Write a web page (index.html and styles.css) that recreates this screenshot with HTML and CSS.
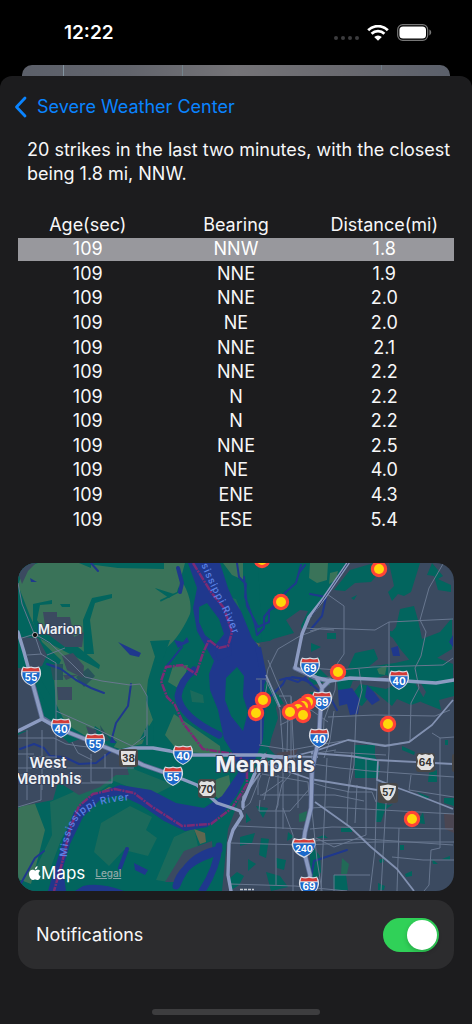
FILE: index.html
```html
<!DOCTYPE html>
<html lang="en">
<head>
<meta charset="utf-8">
<meta name="viewport" content="width=device-width, initial-scale=1">
<title>Lightning strikes</title>
<link rel="stylesheet" href="styles.css">
</head>
<body>
<header class="status">
  <time class="clock">12:22</time>
  <div class="status-icons">
    <span class="dots"><i></i><i></i><i></i><i></i></span>
    <svg class="wifi" viewBox="0 0 22 16" aria-label="Wi-Fi"><path d="M1.2 5.2a14 14 0 0 1 19.6 0M4.6 8.8a9.2 9.2 0 0 1 12.8 0" fill="none" stroke="#fff" stroke-width="2.8"/><path d="M7.2 12a5.4 5.4 0 0 1 7.6 0L11 15.8z" fill="#fff"/></svg>
    <svg class="battery" viewBox="0 0 35 17" aria-label="Battery"><rect x=".7" y=".7" width="30" height="15.6" rx="5" fill="none" stroke="#777" stroke-width="1.2"/><rect x="2.4" y="2.4" width="26.6" height="12.2" rx="3.6" fill="#fff"/><path d="M32.4 5.6c2.4 1 2.4 4.8 0 5.8z" fill="#777"/></svg>
  </div>
</header>
<div class="peek"></div>
<main class="sheet">
  <nav class="nav">
    <a class="back" href="#"><svg viewBox="0 0 13 22" aria-hidden="true"><path d="M11 2 2.500 11 11 20" fill="none" stroke="currentColor" stroke-width="2.8" stroke-linecap="round" stroke-linejoin="round"/></svg>Severe Weather Center</a>
  </nav>
  <p class="summary">20 strikes in the last two minutes, with the closest being 1.8 mi, NNW.</p>
  <table class="strikes">
    <thead><tr><th>Age(sec)</th><th>Bearing</th><th>Distance(mi)</th></tr></thead>
    <tbody>
      <tr class="selected"><td>109</td><td>NNW</td><td>1.8</td></tr>
      <tr><td>109</td><td>NNE</td><td>1.9</td></tr>
      <tr><td>109</td><td>NNE</td><td>2.0</td></tr>
      <tr><td>109</td><td>NE</td><td>2.0</td></tr>
      <tr><td>109</td><td>NNE</td><td>2.1</td></tr>
      <tr><td>109</td><td>NNE</td><td>2.2</td></tr>
      <tr><td>109</td><td>N</td><td>2.2</td></tr>
      <tr><td>109</td><td>N</td><td>2.2</td></tr>
      <tr><td>109</td><td>NNE</td><td>2.5</td></tr>
      <tr><td>109</td><td>NE</td><td>4.0</td></tr>
      <tr><td>109</td><td>ENE</td><td>4.3</td></tr>
      <tr><td>109</td><td>ESE</td><td>5.4</td></tr>
    </tbody>
  </table>
  <div class="map">
    <svg class="map-art" viewBox="18 563 436 328" preserveAspectRatio="xMidYMid slice" role="img" aria-label="Map of strikes near Memphis">
      <defs>
        <symbol id="interstate" viewBox="-11 -11 22 22" overflow="visible">
          <path d="M-8-9.500Q-4-8 0-9.500 4-8 8-9.500 11-5 9.700 0 8 6.500 0 10-8 6.500-9.700 0-11-5-8-9.500z" fill="#d9dce5"/>
          <path d="M-8.600-3.800H8.600Q9.500 5 0 8.700-9.500 5-8.600-3.800z" fill="#1b68ca"/>
          <path d="M-7.600-8.200Q-4-6.800 0-8.200 4-6.800 7.600-8.200L8.500-4.800H-8.500z" fill="#d23b37"/>
        </symbol>
        <g id="strike"><circle r="8.200" fill="#ff4336"/><circle r="5" fill="#ffd60a"/></g>
        <path id="river-north" d="M194 546Q205 576 216 597 228 620 236 642"/>
        <path id="river-south" d="M67 857Q67 836 78 819 92 801 137 800"/>
      </defs>

      <rect x="18" y="563" width="436" height="328" fill="#3b4a60"/>
      <!-- floodplain -->
      <path fill="#02655e" d="M18 563H345L325 594 314 601 308 622 294 634 270 640 258 643 266 680 278 696 270 745 256 770 240 797 228 829 222 891H18z"/>
      <path fill="#3a7359" d="M24 568 38 563H185L177 592 160 600 168 621 157 650 148 680 146 700 153 720 142 744 120 749 92 740 66 724 56 704 54 678 61 660 42 642 30 616 18 585z"/>
      <path fill="#3a7359" d="M172 566Q194 595 190 614 177 643 160 652L160 602 180 592zM223 563H243V580L232 575zM268 578 276 584 273 594 266 588zM174 714 220 746 221 755 178 751 165 735zM188 665 181 690 168 682 173 666zM217 779 229 775 232 796 222 802 206 788zM18 808 34 801 45 830 38 858 31 884 18 879z"/>
      <path fill="#1b6a5b" d="M50 802 92 784 131 768 174 785 152 796 114 781 80 805 61 840 46 880H30L52 835zM101 823 130 806 152 817 146 830 157 838 148 856 124 850 109 866 94 852zM174 837 194 828 198 846 184 864 168 882 156 880zM190 690 203 695 204 703 192 702zM224 596 236 599 242 614 238 612zM262 567 286 563 300 580 284 588 272 584zM268 603 288 608 306 601 294 621 276 618z"/>
      <!-- wooded bands on the farmland -->
      <path fill="#02655e" d="M80 563H164V569L118 568zM92 598 112 594V598L95 603 90 620 94 654H84L83 620zM33 604 52 600V604L40 605 37 620 46 633 78 647 100 665 99 669 72 655 39 638 33 622zM60 604H70V607H62zM155 588 174 594 169 598 156 589zM150 641 170 640 162 662 157 663zM40 678 58 708 53 716 33 680zM95 726 117 742 113 748 91 735zM56 724 72 731 90 741 76 742 56 730zM144 734 153 720 154 746 144 745zM79 563H91V568zM148 724 152 736 139 741z"/>
      <path fill="#28535b" d="M50 664H63V680H53zM76 677 88 668 95 676 84 687zM100 725 110 740 103 742z"/>
      <!-- settlements -->
      <path fill="#3b4a60" d="M18 563H36L28 571 22 584 18 572zM43 612H57V617H70L74 637 84 632 82 647H65L46 633zM20 637 38 638 47 655 42 666 29 670zM62 656 73 653 84 666 83 678 67 670zM18 670 30 676 32 701H18zM57 687H72V700H58zM18 735 46 722 69 743 83 738 98 747 123 752 126 763 129 775H116L100 787 79 795 58 782 53 800 18 807zM18 668H32L45 725 18 733zM86 726 96 730 98 741 90 738zM63 675H78L66 680z"/>
      <path fill="#3b4a60" d="M184 851 212 841 213 855 194 865 178 882H165z"/>
      <!-- city woods -->
      <path fill="#02655e" d="M258 563H346L318 605 310 618 303 629 294 634 276 640 262 642zM292 563H318L314 585 297 610 280 610zM350 570 374 563 384 568 371 582 355 583 345 591 334 590zM389 563H420L411 592 404 596 398 594 392 601 388 592 394 586zM351 598 357 595 354 600zM432 563 443 576 438 579 451 585V592L438 590 434 576 427 575zM400 609 414 606 418 620 422 639 440 632 452 618V649L432 661 412 663 401 650 390 634H390L396 627zM390 631 408 634 420 628 419 640 400 643 390 636zM327 633H336V639H327zM311 643 321 647 311 652zM355 653 374 649 378 659 366 669 348 668zM307 666 320 657 318 667 331 680 310 686zM395 663 430 655 453 664V681L411 684 386 675 371 680 340 681 345 670zM360 684 386 689 400 682 415 683 425 700 411 705 397 699 392 706 374 691 362 706 348 700zM419 680 454 682V696L439 700 441 710 421 702 426 692zM354 745H375V756L380 767 378 778H355zM402 746 415 752 414 755 402 750zM429 773 437 770 437 782H428zM444 798H454V806L444 803zM417 792 430 797 425 799zM376 802 389 805 393 804 385 810 381 822H376zM423 812 425 824 417 823zM445 740H448V745H445zM337 680 354 678 350 688 344 694 338 690zM310 692 319 692 320 702 312 699z"/>
      <path fill="#02655e" d="M310 843 320 856 321 872 310 890zM333 875H346L348 890H334zM316 838 324 835 328 838zM341 828H352V832H341zM400 845H404V850H400zM379 860 384 858 384 862 380 863zM405 874 412 871V876L406 877zM378 883 385 886 384 890H378zM432 859 438 864 433 864zM442 859 450 856V860zM244 780 251 777 247 785zM246 813 251 820 246 823zM256 806 268 808 263 818zM240 837 255 833 252 843 240 846zM261 838 269 839 266 858 259 855zM248 859 256 864 248 871zM276 858 286 860 284 870 277 868zM266 872 280 876 288 887 271 891zM237 872 244 876 239 885 230 891 230 878zM288 832 294 837 287 841zM268 697 273 694 278 718 270 742 264 744zM266 745 276 756 268 766zM278 694 284 704 274 706z"/>
      <path fill="#3a7359" d="M310 563H328L327 580 317 583 309 578zM377 669 387 665 385 675 379 674zM321 679 331 676 330 685 325 686zM330 573 338 571 336 580 329 584z"/>
      <path fill="#226a57" d="M342 858 349 864 347 874H341zM299 814 307 811 306 821 299 822z"/>
      <path fill="#3b4a60" d="M286 620 300 610 308 611 301 626 306 643 284 645 264 660 259 648 273 639 294 633z"/>
      <path fill="#60674f" d="M194 829 205 833 206 842 200 844zM97 794 109 787 116 789 105 796 96 799zM255 642 260 644 257 648 254 646z"/>
      <path fill="#4b4652" d="M444 814H454V833L445 829zM277 753 298 749 294 758 283 770 277 763z"/>
      <!-- river -->
      <path fill="#1f388d" d="M188 563H220L228 588 233 599 241 611 252 638 258 645 263 668 265 704 263 739 255 760 246 777 237 795 224 812 207 827 185 831 164 821 141 805 120 795 101 799 83 817 70 844 63 868 66 891H48L56 864 64 838 74 812 91 795 120 785 151 790 176 803 204 808 222 796 238 773 234 755 224 739 218 710 210 690 209 674 214 661 207 649 197 631 193 608 197 588z"/>
      <path fill="#02655e" d="M199 607 207 603 219 619 224 634 216 644 205 635 199 622zM226 678 237 667 244 676 243 696 248 712 243 731 231 716 225 700z"/>
      <g fill="none" stroke="#1f388d" stroke-linecap="round" stroke-linejoin="round">
        <path stroke-width="7" d="M194 670Q181 680 178 696 180 716 219 735"/>
        <path stroke-width="7" d="M176 886Q181 865 209 855L219 850M219 846Q217 868 202 891M216 850Q188 856 177 885"/>
        <path stroke-width="2" d="M166 667 182 647M237 563 239 577 246 584 245 597 255 624 257 635 264 628 264 617 274 605 287 591 296 583 301 565M299 573 305 565M244 577 247 606 258 627 269 622 269 610 281 605M47 664 61 669 76 680 91 688 104 693M131 684 128 706 116 723 111 742M20 749 34 744 44 748 50 756 64 757 79 764 96 763 110 752M91 563 98 571M292 677 306 679 312 684M271 696 283 684 286 678 298 682 306 677M310 594 326 597 322 616 311 629M280 680Q300 672 318 690L330 697 337 710M310 884 314 861 329 856 347 850M20 885 35 858 44 851"/>
        <path stroke-width="4" d="M120 868 127 849M178 568 182 583 180 592"/>
      </g>
      <path fill="#1f388d" d="M30 578 37 582H31zM118 642 141 653 139 657 130 655zM338 690 352 688 360 700 358 714 350 715 347 704 339 706zM367 685 374 692 380 700 372 705 365 697zM391 648 398 646 400 656 393 656zM134 863 148 870 145 875 135 870zM174 640 183 642 187 637 189 642 178 648zM215 651 231 642 232 655 218 661zM255 647H261L267 677 263 688zM453 635V647L449 642zM83 886Q100 882 124 891H75zM113 738 116 743 111 743z"/>
      <!-- state line -->
      <path fill="none" stroke="#7a2b74" stroke-width="2.500" stroke-dasharray="8 1 2 1" d="M193 563 211 592 224 608 232 632 228 646 219 648 209 640 203 653 196 674 182 665 166 667 161 681 167 697 175 705 183 723 203 749 239 755 247 770 247 784 232 808 211 824 182 826 151 806 134 793 115 789 93 794 79 806 70 829 62 863 54 891"/>

      <!-- minor roads -->
      <g fill="none" stroke="#68778f" stroke-width="1" stroke-linejoin="round">
        <path d="M18 583 22 604 35 636 41 654 56 663V768M22 638 35 634 50 643 73 665 85 677 102 681 130 685 140 684 147 696V745M42 654 27 655M47 655 65 648M56 711 90 726 132 746 145 736V730M18 738H54L66 744 79 746 98 748M28 757H57M18 754H34M42 730V790M27 730V800M72 742 78 753 92 760M18 768H134M18 775H70M81 775V783H112V768M105 754V768M91 754V782H112M18 807 41 800V775"/>
        <path d="M327 594 344 606V654L337 664 335 690 324 720 323 742M310 631 322 628 375 630 389 622 453 619M389 622V673L389 750 381 891M443 564 429 588 420 620 426 632 421 656 415 668 419 688 411 703 410 742M310 668 338 670 373 667 443 665 453 658M359 669 362 690 356 714 354 765 348 793 347 825M268 679 265 696M268 679H256M319 629 300 636 278 649 268 669 266 680 280 710 283 752M305 628 334 630M279 696H291L294 760M261 680 261 744M291 697V759M280 725 311 710 328 722M268 660 277 682 288 706 287 752M259 745 291 750 318 745 348 740 386 745 410 742 432 725 453 700M432 733 440 738 454 737M440 738V848L431 850 429 885 424 891M328 717 375 715 435 716 450 710M311 754 336 750M313 764 340 768 370 771 454 777M312 753 310 791 317 860 322 891M324 758 330 740 334 711M327 758 321 891M334 752 350 753 386 755M352 752 348 793M366 759V835L334 847 316 838"/>
        <path d="M261 775 250 803 244 808M260 800 259 811H290L312 786V776M262 795 283 780M278 775 278 805 276 810V885M258 775V795M290 760V775L282 784 276 810M283 808 293 835V845 891M238 826 303 829M231 843 302 845 375 842H454M230 884 295 886 347 891M262 774 308 782 309 795H260M266 764 310 770 309 790M310 782 326 787 350 792 372 792 376 802M310 795 335 795 364 801M310 808 329 807 454 814M310 829 332 827 453 829M399 828 397 891M377 780 375 850 370 891M310 841 366 839 453 845M392 857 423 860H454M334 891V875H370M411 775 409 790 454 797M357 785 355 823M283 770V829M273 763 264 800M298 758V808"/>
      </g>
      <!-- secondary roads -->
      <g fill="none" stroke="#8190b0" stroke-width="1.800" stroke-linejoin="round">
        <path d="M267 764 310 779 377 790M315 802 350 827 371 847 397 869 414 891M378 780 398 788 420 796 453 809M311 753 350 756 376 760 453 764M378 760 377 780 390 785M287 758 318 750 348 740 385 746 409 742 432 725 453 700M260 773 243 797V810M266 675 280 707M266 764 278 756 318 757"/>
      </g>
      <!-- highways -->
      <g fill="none" stroke-linecap="round" stroke-linejoin="round">
        <g stroke="#5c6c94" stroke-width="5"><path d="M30 674 42 718M42 718 60 729 95 743 117 752 143 765 172 775M295 668 318 679 330 680 322 688 320 718 319 738 312 770 311 808 305 832 303 847 310 875V891"/></g>
        <g stroke="#8c9bc1" stroke-width="3.400"><path d="M18 632 24 652 30 674 42 718M18 731 42 719 60 729 95 743 117 752 143 765 172 775 197 785 217 803 232 808 240 811 242 816 233 830 229 843 228 875 231 891M117 752 133 748H153L170 751 183 755H260L287 758M348 563 324 598 309 617 302 634 295 668 318 678 330 681 350 678 390 680 436 683 454 680M330 680 322 688 320 718 319 738 312 770 311 808 305 832 303 847 310 875V891M317 679 322 688M265 755 255 773 243 802V807"/></g>
      </g>
      <path d="m348 563-36 53" stroke="#33436a" stroke-width="1"/>

      <g class="shields">
        <use href="#interstate" x="20" y="665" width="22" height="22"/><text x="31" y="681">55</text>
        <use href="#interstate" x="50" y="717" width="22" height="22"/><text x="61" y="733">40</text>
        <use href="#interstate" x="84" y="732" width="22" height="22"/><text x="95" y="748">55</text>
        <use href="#interstate" x="172" y="744" width="22" height="22"/><text x="183" y="760">40</text>
        <use href="#interstate" x="162" y="765" width="22" height="22"/><text x="173" y="781">55</text>
        <use href="#interstate" x="299" y="656" width="22" height="22"/><text x="310" y="672">69</text>
        <use href="#interstate" x="311" y="690" width="22" height="22"/><text x="322" y="706">69</text>
        <use href="#interstate" x="308" y="727" width="22" height="22"/><text x="319" y="743">40</text>
        <use href="#interstate" x="388" y="669" width="22" height="22"/><text x="399" y="685">40</text>
        <use href="#interstate" x="298" y="875" width="22" height="22"/><text x="309" y="890">69</text>
        <path d="M294 838Q299 840 304 838 309 840 314 838 317 844 314 849 311 855 304 858 296 855 293 849 290 844 294 838z" fill="#d9dce5"/><path d="M293 843.500H315Q315 852 304 856.500 293 852 293 843.500z" fill="#1b68ca"/><path d="M295 839.500Q299 841 304 839.500 309 841 313 839.500L314.500 842.500H293.500z" fill="#d23b37"/><text class="three" x="304" y="852">240</text>
      </g>
      <g class="routes">
        <rect x="119" y="749" width="19" height="18" rx="3"/><path d="M121 751H136L135 757V765H123L121 758z"/><text x="128.500" y="762">38</text>
        <rect x="198" y="779" width="18" height="19" rx="3"/><path d="M201 781 204 782 207 781 210 782 213 781 215 784 213 787 215 792 211 796H203L199 792 201 787 199 784z"/><text x="207" y="793">70</text>
        <rect x="416" y="753" width="19" height="19" rx="3"/><path d="M419 754 422 755 425.500 754 429 755 432 754 434 757 433 761 434 766 430 770H421L417 766 418 761 417 757z"/><text x="425.500" y="766">64</text>
        <rect x="378" y="783" width="20" height="20" rx="3"/><path d="M380 786 388 784.500 396 786Q396 794 391 799 388 802 385 799 380 794 380 786z"/><text x="388" y="796">57</text>
        <rect x="452" y="754" width="4" height="18" rx="2"/>
      </g>
      <g class="river-name">
        <text><textPath href="#river-north">Mississippi River</textPath></text>
        <text><textPath href="#river-south">Mississippi River</textPath></text>
      </g>
      <circle cx="35" cy="635" r="2.600" fill="#111" stroke="#a4acb8" stroke-width="1"/>
      <path d="M240 889.500H254" stroke="#c5cad3" stroke-width="1.500" stroke-dasharray="3 1"/>
      <g class="places">
        <text class="town" x="38" y="634">Marion</text>
        <text class="suburb" x="48" y="768">West</text>
        <text class="suburb" x="48" y="784">Memphis</text>
        <text class="city" x="265" y="772">Memphis</text>
      </g>
      <g>
        <use href="#strike" x="262" y="560"/><use href="#strike" x="379" y="569"/><use href="#strike" x="281" y="602"/><use href="#strike" x="338" y="672"/>
        <use href="#strike" x="263" y="700"/><use href="#strike" x="256" y="713"/><use href="#strike" x="308" y="702"/><use href="#strike" x="303" y="706"/><use href="#strike" x="298" y="709"/><use href="#strike" x="290" y="712"/><use href="#strike" x="303" y="715"/>
        <use href="#strike" x="388" y="724"/><use href="#strike" x="412" y="819"/>
      </g>
    </svg>
    <div class="credit">
      <svg class="apple" viewBox="0 0 12 15" aria-hidden="true"><path fill="#fff" d="M8.500 0C8.500 2 7.400 3.400 5.900 3.500 5.800 1.800 7.100.3 8.500 0zM6.100 4.500C7 4.400 7.700 3.600 8.800 3.700c1 0 1.900.5 2.400 1.300-2.300 1.400-1.900 4.500.5 5.400-.7 1.900-1.700 3.600-3.100 3.600-1 0-1.300-.6-2.400-.6-1.200 0-1.500.6-2.400.6C1.800 14 0 10.700 0 8c0-2.700 1.700-4.200 3.400-4.200 1.100 0 1.900.7 2.700.7z"/></svg>
      <span class="brand">Maps</span>
      <a class="legal" href="#">Legal</a>
    </div>
  </div>
  <label class="setting"><span>Notifications</span><input class="switch" type="checkbox" role="switch" checked></label>
  <div class="home"></div>
</main>
</body>
</html>
```
FILE: styles.css
```css
* { box-sizing: border-box; }

body {
  margin: 0;
  min-height: 100vh;
  display: flex;
  flex-direction: column;
  background: #000;
  color: #f7f7f8;
  font: 18px/24px Inter, "Liberation Sans", sans-serif;
}

.status {
  height: 65px;
  padding: 0 40px 0 64px;
  display: flex;
  align-items: center;
  justify-content: space-between;
}
.clock { font-size: 19px; font-weight: 600; color: #fff; }
.status-icons { display: flex; align-items: center; gap: 8px; }
.dots { display: flex; gap: 3px; padding-top: 10px; }
.dots i { width: 4px; height: 4px; border-radius: 50%; background: #3c3c3e; }
.wifi { width: 22px; height: 16px; }
.battery { width: 35px; height: 17px; }

.peek {
  height: 11px;
  margin: 0 22px;
  border-radius: 10px 10px 0 0;
  background:
    linear-gradient(#8394a0, #8394a0) 41px 0 / 1px 11px no-repeat,
    linear-gradient(#73838c, #73838c) 160px 0 / 1px 11px no-repeat,
    linear-gradient(#6d7c88, #6d7c88) 359px 0 / 1px 5px no-repeat,
    linear-gradient(90deg, #5c606a, #62646c 25%, #747377 50%, #69696f 75%, #5b606b);
}

.sheet {
  flex: 1;
  display: flex;
  flex-direction: column;
  padding: 0 18px 9px;
  border-radius: 12px 12px 0 0;
  background: #1c1c1e;
}
.nav { padding-top: 19px; margin-left: -4px; }
.back {
  display: inline-flex;
  align-items: center;
  gap: 10px;
  color: #0a84ff;
  text-decoration: none;
}
.back svg { width: 13px; height: 22px; }
.summary { margin: 14px 0 0 9px; }

.strikes {
  width: 100%;
  height: 321px;
  margin-top: 26px;
  table-layout: fixed;
  border-spacing: 0 2px;
  line-height: 22px;
  text-align: center;
}
.strikes th, .strikes td { padding: 0; font-weight: 400; }
.strikes th:first-child, .strikes td:first-child { width: 32%; }
.strikes th:last-child, .strikes td:last-child { width: 32%; }
.selected { background: #98989d; color: #fff; }

.map {
  position: relative;
  margin-top: 30px;
  border-radius: 18px;
  overflow: hidden;
}
.map-art { display: block; width: 100%; height: auto; }
.shields text { fill: #fff; font-size: 10px; font-weight: 700; text-anchor: middle; }
.shields .three { font-size: 9px; }
.routes rect { fill: #484747; }
.routes path { fill: #e2e2e2; }
.routes text { fill: #333; font-size: 10px; font-weight: 700; text-anchor: middle; }
.river-name text { fill: #5c83e6; font-size: 10px; font-weight: 500; letter-spacing: 1px; }
.places text {
  fill: #f0f2f6;
  stroke: #34415a;
  stroke-width: 2px;
  paint-order: stroke;
  stroke-linejoin: round;
  font-weight: 600;
}
.places .town { font-size: 13px; }
.places .suburb { font-size: 15px; text-anchor: middle; }
.places .city { font-size: 22px; font-weight: 700; text-anchor: middle; }

.credit {
  position: absolute;
  left: 11px;
  bottom: 8px;
  display: flex;
  align-items: center;
}
.apple { width: 12px; height: 15px; }
.brand { color: #fff; font-size: 17px; line-height: 20px; }
.legal { margin-left: 10px; color: #8fa9a9; font-size: 10px; line-height: 12px; font-weight: 500; }

.setting {
  display: flex;
  align-items: center;
  justify-content: space-between;
  height: 69px;
  margin-top: 9px;
  padding: 0 15px 0 18px;
  border-radius: 18px;
  background: #2c2c2e;
}
.switch {
  appearance: none;
  display: flex;
  justify-content: flex-end;
  width: 56px;
  height: 34px;
  margin: 0;
  padding: 2px;
  border-radius: 17px;
  background: #30d158;
}
.switch::before {
  content: "";
  width: 30px;
  height: 30px;
  border-radius: 50%;
  background: #fff;
  box-shadow: 0 2px 5px #0003;
}
.switch:not(:checked) { justify-content: flex-start; background: #48484a; }

.home {
  width: 168px;
  height: 6px;
  margin: auto auto 0;
  border-radius: 3px;
  background: #3d3d3f;
}
```
